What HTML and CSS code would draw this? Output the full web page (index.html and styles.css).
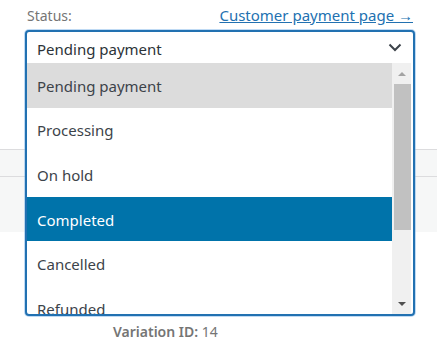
FILE: index.html
```html
<!DOCTYPE html>
<html>
<head>
<meta charset="utf-8">
<link rel="stylesheet" href="styles.css">
</head>
<body>
<div class="page">
  <div class="top-row">
    <span class="label">Status:</span>
    <a class="link" href="#">Customer payment page →</a>
  </div>
  <div class="field">
    <div class="combo">
      <div class="combo-head">
        <span class="current">Pending payment</span>
        <svg class="chev" width="14" height="9" viewBox="0 0 14 9"><path d="M1.5 1.5 L7 7 L12.5 1.5" fill="none" stroke="#3c434a" stroke-width="2"/></svg>
      </div>
      <div class="combo-list">
        <div class="items">
          <div class="item hover">Pending payment</div>
          <div class="item">Processing</div>
          <div class="item">On hold</div>
          <div class="item selected">Completed</div>
          <div class="item">Cancelled</div>
          <div class="item">Refunded</div>
        </div>
        <div class="scrollbar">
          <div class="sb-btn"><span class="tri up"></span></div>
          <div class="sb-thumb"></div>
          <div class="sb-track"></div>
          <div class="sb-btn"><span class="tri down"></span></div>
        </div>
      </div>
    </div>
  </div>
  <div class="backdrop">
    <div class="bd-row first"></div>
    <div class="bd-row second"></div>
  </div>
  <div class="variation"><b>Variation ID:</b> 14</div>
</div>
</body>
</html>
```
FILE: styles.css
```css
html, body {
  margin: 0;
  padding: 0;
  background: #ffffff;
}
body {
  font-family: "Noto Sans", "Open Sans", sans-serif;
  width: 437px;
  height: 345px;
  overflow: hidden;
}
.page {
  display: flex;
  flex-direction: column;
}
.top-row {
  display: flex;
  justify-content: space-between;
  align-items: baseline;
  padding: 5px 24px 0 27px;
  height: 25px;
}
.label {
  font-size: 14px;
  color: #757575;
}
.link {
  font-size: 15px;
  color: #2271b1;
  text-decoration: underline;
}
.field {
  position: relative;
  margin: 0 22px 0 25px;
  height: 32px;
}
.combo {
  position: absolute;
  top: 0;
  left: 0;
  right: 0;
  height: 286px;
  box-sizing: border-box;
  border: 2px solid #2271b1;
  border-radius: 4px;
  box-shadow: 0 0 0 1px rgba(114, 174, 230, 0.45);
  background: #fff;
  display: flex;
  flex-direction: column;
  overflow: hidden;
  z-index: 2;
}
.combo-head {
  height: 30px;
  box-sizing: border-box;
  flex: none;
  display: flex;
  align-items: center;
  justify-content: space-between;
  padding: 4px 11px 0 10px;
  font-size: 15px;
  color: #2c3338;
}
.chev {
  margin-top: -3px;
}
.combo-list {
  flex: 1;
  display: flex;
  margin-top: 1px;
  margin-right: 2px;
  overflow: hidden;
}
.items {
  flex: 1;
  display: flex;
  flex-direction: column;
  overflow: hidden;
}
.item {
  flex: none;
  height: 44.6px;
  box-sizing: border-box;
  display: flex;
  align-items: center;
  padding: 1px 0 0 10px;
  font-size: 15px;
  color: #3c434a;
}
.item.hover {
  background: #dcdcdc;
}
.item.selected {
  background: #0073aa;
  color: #ffffff;
}
.scrollbar {
  width: 19px;
  flex: none;
  background: #f0f0f0;
  display: flex;
  flex-direction: column;
}
.sb-btn {
  height: 21px;
  flex: none;
  display: flex;
  align-items: center;
  justify-content: center;
}
.sb-thumb {
  height: 146px;
  flex: none;
  margin: 0 0 0 2px;
  background: #c1c1c1;
}
.sb-track {
  flex: 1;
}
.tri {
  width: 0;
  height: 0;
  border-left: 4px solid transparent;
  border-right: 4px solid transparent;
}
.tri.up {
  border-bottom: 4px solid #a3a3a3;
}
.tri.down {
  border-top: 4px solid #505050;
}
.backdrop {
  margin-top: 87px;
  display: flex;
  flex-direction: column;
}
.bd-row {
  background: #f6f7f7;
  border-top: 1px solid #dcdcde;
}
.bd-row.first {
  height: 26px;
}
.bd-row.second {
  height: 55px;
}
.variation {
  margin-top: 90px;
  padding-left: 113px;
  font-size: 14px;
  color: #757575;
}
.variation b {
  font-weight: 600;
}
```
